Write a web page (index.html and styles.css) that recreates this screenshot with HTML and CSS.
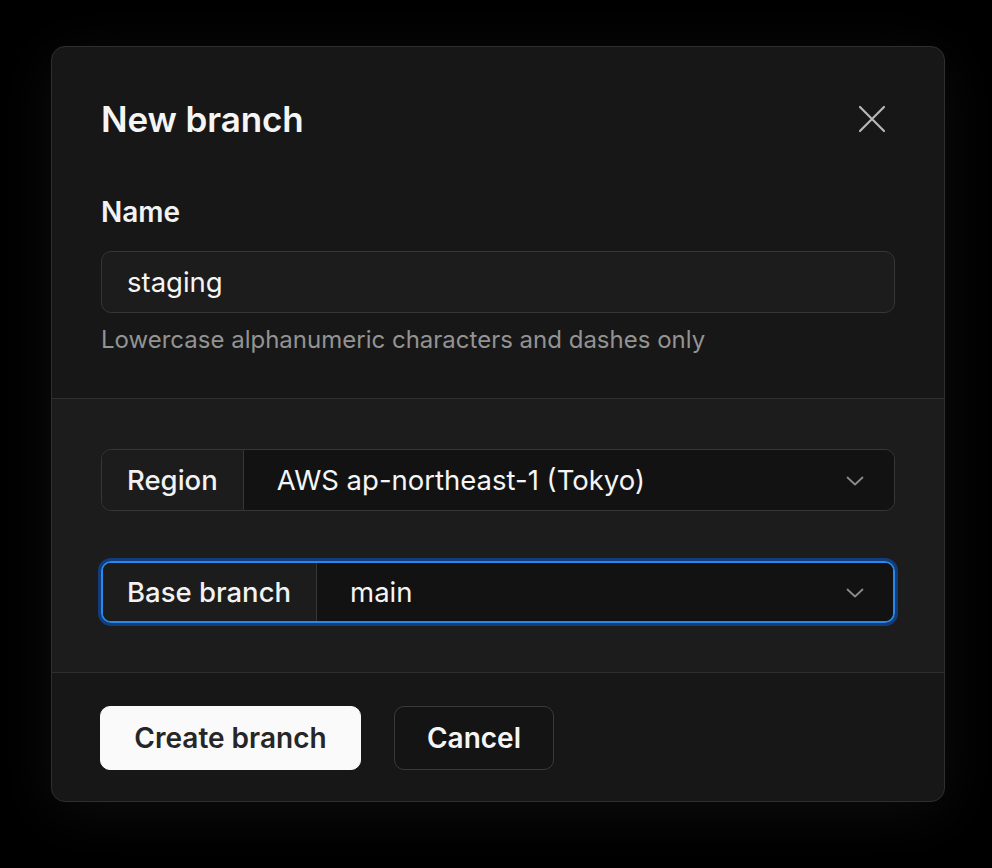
FILE: index.html
```html
<!DOCTYPE html>
<html lang="en">
<head>
<meta charset="utf-8">
<title>New branch</title>
<link rel="stylesheet" href="styles.css">
</head>
<body>
<div class="dialog">
  <section class="sec sec-top">
    <div class="head">
      <h1 class="title">New branch</h1>
      <button class="close" aria-label="Close">
        <svg width="28" height="28" viewBox="0 0 28 28" fill="none" stroke="currentColor" stroke-width="2.2" stroke-linecap="round"><path d="M2 2L26 26M26 2L2 26"/></svg>
      </button>
    </div>
    <label class="label">Name</label>
    <div class="input">staging</div>
    <p class="help">Lowercase alphanumeric characters and dashes only</p>
  </section>
  <section class="sec sec-mid">
    <div class="select">
      <span class="sel-label">Region</span>
      <span class="sel-value">AWS ap-northeast-1 (Tokyo)</span>
      <svg class="chev" width="18" height="10" viewBox="0 0 18 10" fill="none" stroke="currentColor" stroke-width="1.8" stroke-linecap="round" stroke-linejoin="round"><path d="M1.5 1.5L9 8.5L16.5 1.5"/></svg>
    </div>
    <div class="select focused">
      <span class="sel-label">Base branch</span>
      <span class="sel-value">main</span>
      <svg class="chev" width="18" height="10" viewBox="0 0 18 10" fill="none" stroke="currentColor" stroke-width="1.8" stroke-linecap="round" stroke-linejoin="round"><path d="M1.5 1.5L9 8.5L16.5 1.5"/></svg>
    </div>
  </section>
  <section class="sec sec-foot">
    <button class="btn btn-primary">Create branch</button>
    <button class="btn btn-ghost">Cancel</button>
  </section>
</div>
</body>
</html>
```

FILE: styles.css
```css
* { box-sizing: border-box; }
html, body { margin: 0; background: #000; }
body {
  font-family: Inter, "Noto Sans", sans-serif;
  color: #f2f2f2;
  padding: 46px 0 0 51px;
  height: 868px;
}
.dialog {
  width: 894px;
  height: 756px;
  border: 1px solid #2f2f2f;
  border-radius: 14px;
  background: #171717;
  overflow: hidden;
  display: flex;
  flex-direction: column;
  box-shadow: 0 10px 60px rgba(40,40,40,0.35);
}
.sec { padding: 0 49px; }
.sec-top {
  padding-top: 50px;
  height: 351px;
  display: flex;
  flex-direction: column;
}
.head {
  display: flex;
  justify-content: space-between;
  align-items: center;
  height: 44px;
}
.title {
  margin: 0;
  font-size: 35px;
  line-height: 44px;
  font-weight: 600;
  letter-spacing: -0.1px;
  color: #f5f5f5;
}
.close {
  background: none;
  border: 0;
  padding: 0;
  margin-right: 9px;
  color: #b8b8b8;
  display: flex;
}
.label {
  margin-top: 54px;
  font-size: 28px;
  line-height: 34px;
  font-weight: 600;
  color: #f2f2f2;
}
.input {
  margin-top: 22px;
  height: 62px;
  border: 1px solid #363636;
  border-radius: 10px;
  background: #1c1c1c;
  padding: 0 25px;
  display: flex;
  align-items: center;
  font-size: 27.5px;
  color: #f5f5f5;
}
.help {
  margin: 12px 0 0;
  font-size: 24px;
  line-height: 30px;
  color: #939393;
}
.sec-mid {
  background: #1c1c1c;
  border-top: 1px solid #2e2e2e;
  border-bottom: 1px solid #2e2e2e;
  height: 275px;
  padding-top: 50px;
  display: flex;
  flex-direction: column;
  gap: 50px;
}
.select {
  height: 62px;
  border: 1px solid #363636;
  border-radius: 10px;
  display: flex;
  align-items: stretch;
  overflow: hidden;
  position: relative;
}
.select.focused {
  border: 2px solid #2a88ea;
  box-shadow: 0 0 0 3px #113d7c;
}
.sel-label {
  display: flex;
  align-items: center;
  padding: 0 25px;
  font-size: 27.5px;
  font-weight: 500;
  color: #f2f2f2;
  background: #1c1c1c;
  border-right: 1px solid #363636;
}
.select.focused .sel-label { padding-left: 24px; }
.sel-value {
  flex: 1;
  display: flex;
  align-items: center;
  padding: 0 33px;
  font-size: 27.5px;
  color: #f5f5f5;
  background: #121212;
}
.chev {
  position: absolute;
  right: 30px;
  top: 26px;
  color: #8a8a8a;
}
.select.focused .chev { right: 29px; top: 25px; }
.sec-foot {
  flex: 1;
  display: flex;
  align-items: flex-start;
  gap: 33px;
  padding-top: 33px;
  padding-left: 48px;
}
.btn {
  height: 64px;
  border-radius: 10px;
  font-family: inherit;
  font-size: 28px;
  font-weight: 600;
  padding: 0;
}
.btn-primary {
  background: #fafafa;
  color: #262626;
  border: 1px solid #fafafa;
  width: 261px;
}
.btn-ghost {
  background: #141414;
  color: #f5f5f5;
  border: 1px solid #3a3a3a;
  width: 160px;
}
```
